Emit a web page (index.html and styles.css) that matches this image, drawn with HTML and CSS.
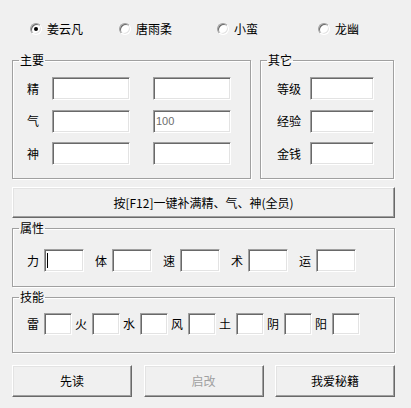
FILE: index.html
```html
<!DOCTYPE html>
<html lang="zh-CN">
<head>
<meta charset="utf-8">
<title>修改器</title>
<link rel="stylesheet" href="styles.css">
</head>
<body>
<div class="page">
  <div class="radios">
    <div class="opt"><span class="radio on"></span><span class="opt-text">姜云凡</span></div>
    <div class="opt"><span class="radio"></span><span class="opt-text">唐雨柔</span></div>
    <div class="opt"><span class="radio"></span><span class="opt-text">小蛮</span></div>
    <div class="opt"><span class="radio"></span><span class="opt-text">龙幽</span></div>
  </div>

  <div class="top">
    <fieldset class="grp main">
      <legend>主要</legend>
      <div class="rows main-rows">
        <div class="row"><span class="lbl1">精</span><div class="field w78 gap-a"></div><div class="field w78"></div></div>
        <div class="row"><span class="lbl1">气</span><div class="field w78 gap-a"></div><div class="field w78"><span class="val">100</span></div></div>
        <div class="row"><span class="lbl1">神</span><div class="field w78 gap-a"></div><div class="field w78"></div></div>
      </div>
    </fieldset>
    <fieldset class="grp other">
      <legend>其它</legend>
      <div class="rows other-rows">
        <div class="row"><span class="lbl2">等级</span><div class="field w64"></div></div>
        <div class="row"><span class="lbl2">经验</span><div class="field w64"></div></div>
        <div class="row"><span class="lbl2">金钱</span><div class="field w64"></div></div>
      </div>
    </fieldset>
  </div>

  <button class="btn wide">按[F12]一键补满精、气、神(全员)</button>

  <fieldset class="grp full attr">
    <legend>属性</legend>
    <div class="line attr-line">
      <span class="lbl1 la">力</span><div class="field w40 ga"><span class="caret"></span></div>
      <span class="lbl1 la">体</span><div class="field w40 ga"></div>
      <span class="lbl1 la">速</span><div class="field w40 ga"></div>
      <span class="lbl1 la">术</span><div class="field w40 ga"></div>
      <span class="lbl1 la">运</span><div class="field w40 ga"></div>
    </div>
  </fieldset>

  <fieldset class="grp full skill">
    <legend>技能</legend>
    <div class="line skill-line">
      <span class="lbl1 la">雷</span><div class="field w28 gs"></div>
      <span class="lbl1 la">火</span><div class="field w28 gs"></div>
      <span class="lbl1 la">水</span><div class="field w28 gs"></div>
      <span class="lbl1 la">风</span><div class="field w28 gs"></div>
      <span class="lbl1 la">土</span><div class="field w28 gs"></div>
      <span class="lbl1 la">阴</span><div class="field w28 gs"></div>
      <span class="lbl1 la">阳</span><div class="field w28 gs"></div>
    </div>
  </fieldset>

  <div class="actions">
    <button class="btn act">先读</button>
    <button class="btn act disabled">启改</button>
    <button class="btn act">我爱秘籍</button>
  </div>
</div>
</body>
</html>
```

FILE: styles.css
```css
html, body {
  margin: 0;
  padding: 0;
  background: #f0f0f0;
}

body {
  font-family: "Noto Sans CJK SC", "Liberation Sans", sans-serif;
  font-size: 12px;
  line-height: 12px;
  color: #000;
  width: 411px;
  height: 408px;
  overflow: hidden;
}

.page {
  padding: 23px 0 0 12px;
  width: 383px;
}

/* radio row */
.radios {
  display: grid;
  grid-template-columns: 89px 98px 101px auto;
  margin-left: 18px;
  height: 12px;
}

.opt {
  display: flex;
  align-items: center;
  height: 12px;
}

.radio {
  box-sizing: border-box;
  width: 12px;
  height: 12px;
  border-radius: 50%;
  border: 1px solid;
  border-color: #a0a0a0 #ffffff #ffffff #a0a0a0;
  box-shadow: inset 1px 1px 0 #696969, inset -1px -1px 0 #e3e3e3;
  background: #fff;
  margin-right: 5px;
  position: relative;
  flex: none;
}

.radio.on::after {
  content: "";
  position: absolute;
  left: 3px;
  top: 3px;
  width: 4px;
  height: 4px;
  border-radius: 50%;
  background: #000;
}

.opt-text {
  white-space: nowrap;
}

/* group boxes */
.top {
  display: flex;
  gap: 9px;
  margin-top: 19px;
}

.grp {
  margin: 0;
  padding: 0;
  min-width: 0;
  box-sizing: border-box;
  border: 1px solid #a0a0a0;
  box-shadow: inset 1px 1px 0 #fff, 1px 1px 0 #fff;
}

.grp legend {
  padding: 0 1px;
  margin-left: 6px;
  font-size: 12px;
  line-height: 12px;
  height: 12px;
}

.main {
  width: 239px;
}

.other {
  width: 134px;
}

.rows {
  display: flex;
  flex-direction: column;
  gap: 9.5px;
  padding: 11px 0 13px 0;
}

.main-rows {
  padding-left: 14px;
}

.other-rows {
  padding-left: 16px;
}

.row {
  display: flex;
  align-items: center;
  height: 23px;
}

.lbl1 {
  width: 12px;
  flex: none;
  text-align: center;
}

.main-rows .lbl1 {
  margin-right: 13px;
}

.lbl2 {
  width: 24px;
  flex: none;
  margin-right: 9px;
  white-space: nowrap;
}

/* sunken text fields */
.field {
  box-sizing: border-box;
  height: 23px;
  flex: none;
  background: #fff;
  border: 1px solid;
  border-color: #a0a0a0 #ffffff #ffffff #a0a0a0;
  box-shadow: inset 1px 1px 0 #696969, inset -1px -1px 0 #e3e3e3;
  display: flex;
  align-items: center;
  padding-left: 2px;
}

.w78 { width: 78px; }
.w64 { width: 64px; }
.w40 { width: 40px; }
.w28 { width: 28px; height: 22px; }

.gap-a {
  margin-right: 23px;
}

.val {
  font-family: "Liberation Sans", "DejaVu Sans", sans-serif;
  font-size: 11px;
  color: #6d6d6d;
  line-height: 11px;
}

.caret {
  display: block;
  width: 1px;
  height: 15px;
  background: #000;
}

/* wide button */
.btn {
  box-sizing: border-box;
  font-family: "Noto Sans CJK SC", "Liberation Sans", sans-serif;
  font-size: 12px;
  line-height: 12px;
  color: #000;
  background: #f0f0f0;
  padding: 0;
  margin: 0;
  border: 1px solid;
  border-color: #ffffff #696969 #696969 #ffffff;
  box-shadow: inset -1px -1px 0 #a0a0a0, inset 1px 1px 0 #e3e3e3;
  border-radius: 0;
  outline: none;
}

.wide {
  display: block;
  width: 383px;
  height: 31px;
  margin-top: 8px;
}

/* full-width groups */
.full {
  width: 383px;
  margin-top: 4px;
}

.line {
  display: flex;
  align-items: center;
  padding-left: 14px;
}

.attr-line {
  padding-top: 15px;
  padding-bottom: 14px;
}

.skill-line {
  padding-top: 10px;
  padding-bottom: 17px;
}

.la {
  margin-right: 5px;
}

.ga {
  margin-right: 11px;
}

.gs {
  margin-right: 3px;
}

/* bottom buttons */
.actions {
  display: flex;
  justify-content: space-between;
  margin-top: 12px;
}

.act {
  width: 120px;
  height: 32px;
}

.act.disabled {
  color: #a0a0a0;
}
```
